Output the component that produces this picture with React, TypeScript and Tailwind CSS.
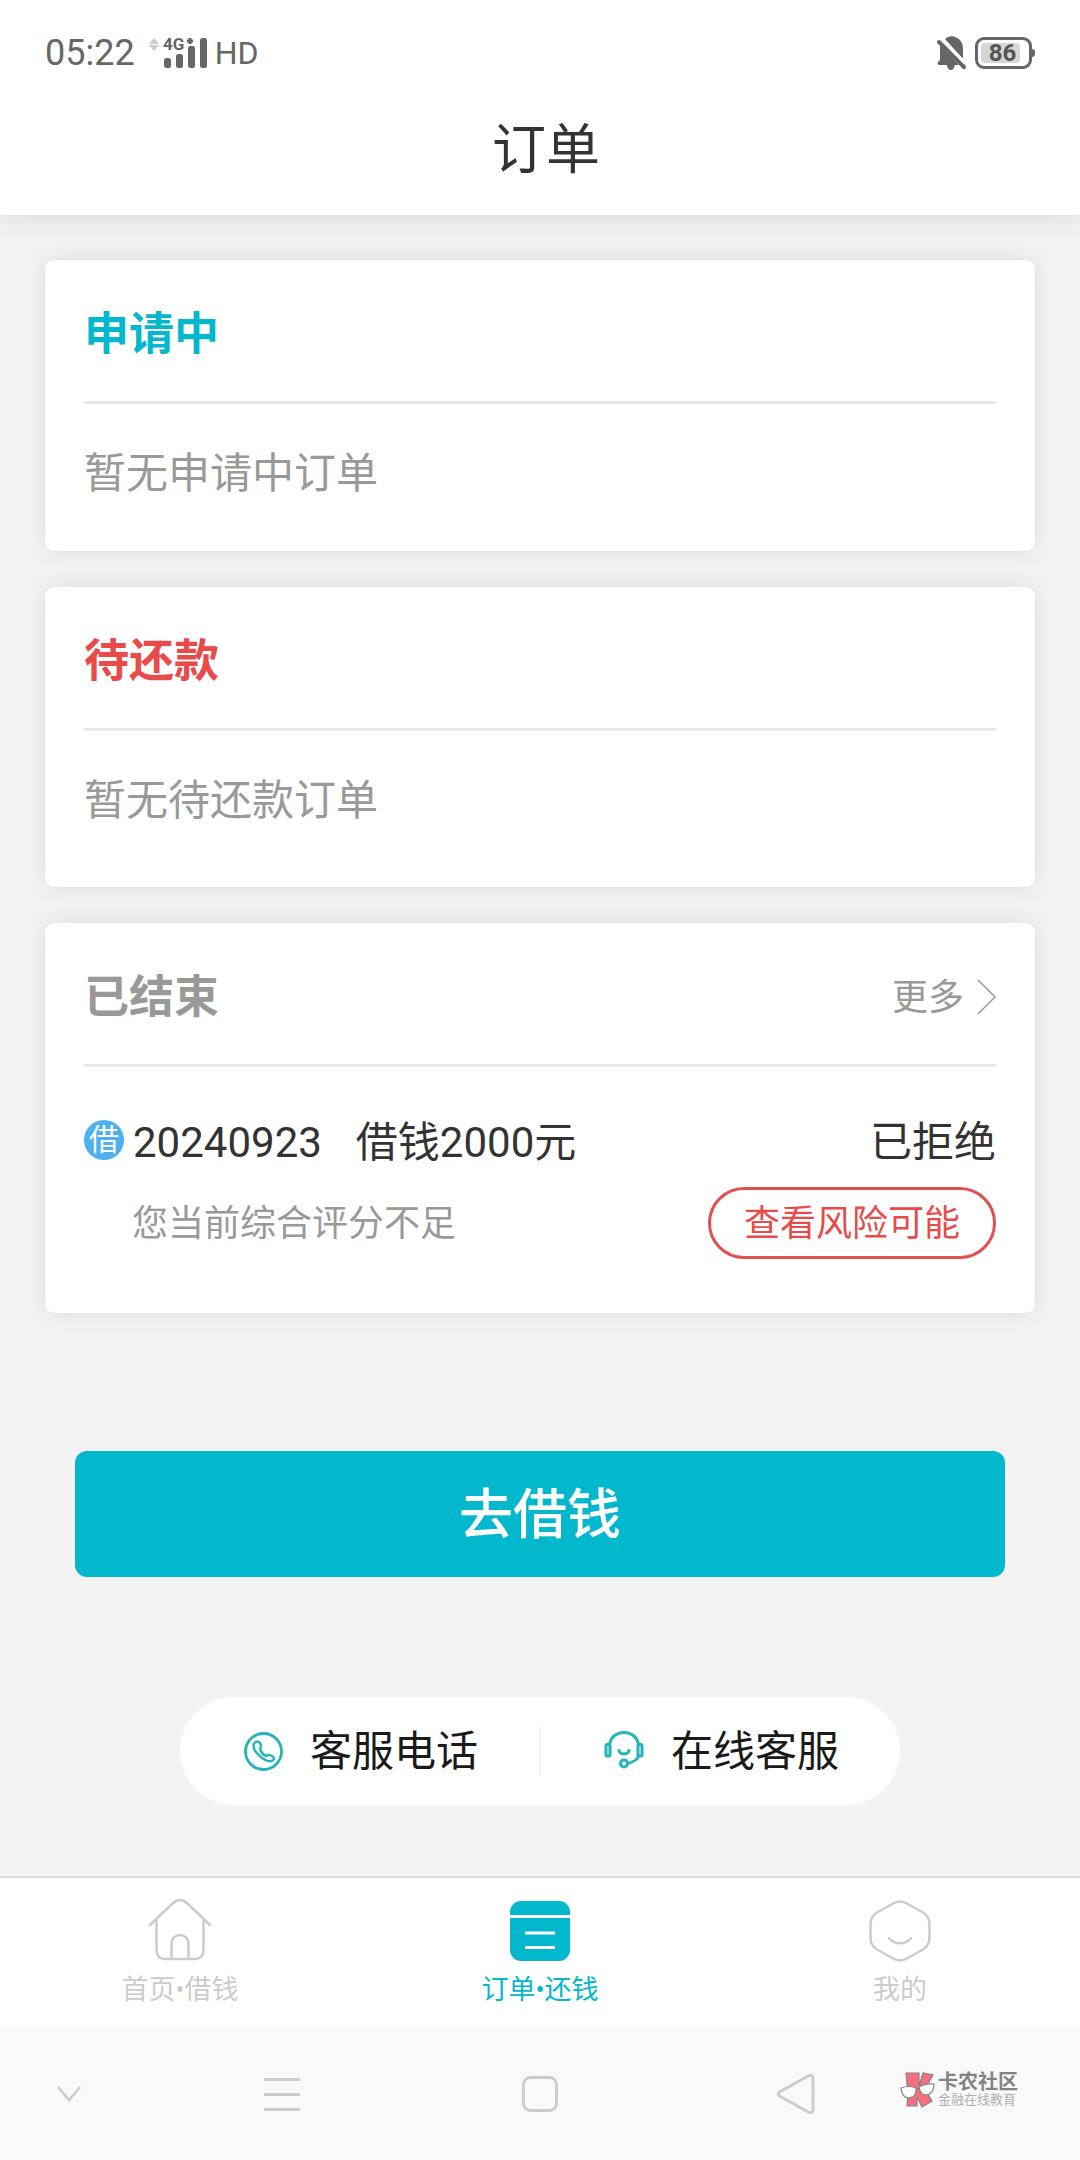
import type { ReactNode } from 'react'

interface OrderCardProps {
  title: string
  titleClass: string
  action?: ReactNode
  bodyClass: string
  children: ReactNode
}

function StatusBar() {
  return (
    <div className="flex h-[75px] items-end justify-between px-[45px] text-[#666]">
      <div className="flex h-11 items-center">
        <span className="text-[36px] leading-[44px]">05:22</span>
        <svg className="ml-3 h-9 w-[64px]" viewBox="0 0 64 36" fill="currentColor" aria-hidden="true">
          <path d="M7 3l5 6H2zM7 16l5-6H2z" fill="#ccc" />
          <text x="16" y="15" fontSize="17" fontWeight="700">4G</text>
          <path d="M43 3v6M40 6h6" stroke="currentColor" strokeWidth="3" />
          <rect x="17" y="23" width="7" height="10" rx="2.500" />
          <rect x="29" y="19" width="7" height="14" rx="2.500" />
          <rect x="41" y="11" width="7" height="22" rx="2.500" />
          <rect x="53" y="3" width="7" height="30" rx="2.500" />
        </svg>
        <span className="ml-1 text-[32px] leading-[44px]">HD</span>
      </div>
      <div className="flex h-11 items-center gap-2">
        <svg className="h-9 w-8" viewBox="0 0 32 36" fill="currentColor" aria-hidden="true">
          <path d="M10 4C13 1 18 0 22 3c4 2 6 6 6 11v10z" />
          <path d="M5 10l19 20h-4c-1 3-2 5-4 5s-4-2-4-5H4c-1 0-2-2-1-3l2-2z" />
          <path d="M4 7l25 25" stroke="currentColor" strokeWidth="4" strokeLinecap="round" />
          <path d="M8 5l22 23" stroke="#fff" strokeWidth="3" />
        </svg>
        <div className="flex items-center">
          <div className="flex h-8 w-[57px] items-center rounded-[9px] border-[3px] border-current pl-[3px]">
            <span className="flex h-5 w-[39px] items-center justify-center rounded-sm bg-[#d6d6d6] pl-1 text-[24px] leading-5 font-bold text-[#555]">
              86
            </span>
          </div>
          <span className="h-2 w-[3px] rounded-r bg-current" />
        </div>
      </div>
    </div>
  )
}

function OrderCard({ title, titleClass, action, bodyClass, children }: OrderCardProps) {
  return (
    <section className="rounded-[9px] bg-white px-[39px] shadow-[0_0_24px_rgba(0,0,0,0.1)]">
      <div className="flex h-36 items-center justify-between border-b-[3px] border-[#e8e8e8] pt-2">
        <h2 className={`text-[45px] leading-[60px] font-bold ${titleClass}`}>{title}</h2>
        {action}
      </div>
      <div className={bodyClass}>{children}</div>
    </section>
  )
}

function PhoneIcon() {
  return (
    <svg className="size-[45px]" viewBox="0 0 45 45" fill="none" stroke="#22b5bb" strokeWidth="2.800" aria-hidden="true">
      <circle cx="22.500" cy="22.500" r="18" />
      <path
        d="M13.500 14c2-2 4-2 5.500 0 1.500 2 1 4 0 6 1 3 3 5.500 5.500 7 2-1 3.500-1.500 5.500-.5 3 1.500 4 3 2 4.500-2 2.500-7 1-11-2-4-3-7-6.500-8-9.500-.7-2-.7-4 .5-5.500z"
        strokeWidth="2.400"
        strokeLinejoin="round"
      />
    </svg>
  )
}

function HeadsetIcon() {
  return (
    <svg className="size-[45px]" viewBox="0 0 45 45" fill="none" stroke="#22b5bb" strokeWidth="3" aria-hidden="true">
      <path d="M7.500 16C8.500 8 14.500 3.500 22 3.500S35.500 8 36.500 16" />
      <rect x="4" y="15.500" width="4" height="11.500" rx="1" />
      <rect x="36" y="15.500" width="4" height="11.500" rx="1" />
      <path d="M17 21.500c1 4.500 9 4.500 10 0" strokeLinecap="round" />
      <circle cx="22" cy="34.500" r="3.500" />
      <path d="M36.500 27c-1 4-5 6-11 7.500" />
    </svg>
  )
}

function HomeIcon() {
  return (
    <svg className="size-16" viewBox="0 0 64 64" fill="none" stroke="#ccc" strokeWidth="2.500" aria-hidden="true">
      <path d="M2 27L25 5q7-6 14 0l23 22" strokeLinecap="round" />
      <path d="M8.500 21v31q0 9 9 9h29q9 0 9-9V21" />
      <path d="M23.500 61V46c0-12 17-12 17 0v15" />
    </svg>
  )
}

function OrderIcon() {
  return (
    <svg className="size-16" viewBox="0 0 64 64" fill="none" aria-hidden="true">
      <rect x="2" y="3" width="60" height="60" rx="11" fill="#03b7cd" />
      <path d="M2 18.500h60M17 35h30M17 49.500h30" stroke="#fff" strokeWidth="3" />
    </svg>
  )
}

function MineIcon() {
  return (
    <svg className="size-16" viewBox="0 0 64 64" fill="none" stroke="#ccc" strokeWidth="2.500" aria-hidden="true">
      <path d="M26 5q6-3 12 0l17 9.500q6.500 4 6.500 12v13q0 8-6.500 12L38 61q-6 3-12 0L9 51.500q-6.500-4-6.500-12v-13q0-8 6.500-12z" />
      <path d="M21 40c5 7 17 7 22 0" strokeLinecap="round" />
    </svg>
  )
}

const tabs = [
  { label: '首页•借钱', icon: <HomeIcon />, active: false },
  { label: '订单•还钱', icon: <OrderIcon />, active: true },
  { label: '我的', icon: <MineIcon />, active: false },
]

function Watermark() {
  return (
    <div className="absolute top-11 right-[62px] flex items-center opacity-90">
      <svg className="h-9 w-[38px]" viewBox="0 0 38 36" stroke="#777" strokeWidth="1.200" aria-hidden="true">
        <path d="M6 1h13v13l4-13 10 2-8 14 7 12-10 6-5-10v9H7l1-11z" fill="#f5616f" />
        <path d="M1 16q8-3 15 0 1 9-7 10-7 0-8-10z" fill="#fff" />
        <path d="M19 15q6-4 15-3 0 9-7 11-7 0-8-8zM16 17l3-1" fill="#fff" />
      </svg>
      <div>
        <p className="text-[20px] leading-5 font-bold text-[#777]">卡农社区</p>
        <p className="text-[13px] leading-4 text-[#aaa]">金融在线教育</p>
      </div>
    </div>
  )
}

function SystemNav() {
  return (
    <div className="relative grid h-[132px] grid-cols-[138fr_288fr_228fr_284fr_142fr] bg-[#f9f9f9] text-[#ccc]">
      <button type="button" aria-label="收起" className="flex items-center justify-center">
        <svg className="size-10" viewBox="0 0 40 40" fill="none" stroke="currentColor" strokeWidth="2.500">
          <path d="M9 13l11 13 11-13" />
        </svg>
      </button>
      <button type="button" aria-label="菜单" className="flex items-center justify-center">
        <svg className="size-10" viewBox="0 0 40 40" fill="none" stroke="currentColor" strokeWidth="3">
          <path d="M2 5.500h36M2 20.500h36M2 35.500h36" />
        </svg>
      </button>
      <button type="button" aria-label="主屏幕" className="flex items-center justify-center">
        <svg className="size-10" viewBox="0 0 40 40" fill="none" stroke="currentColor" strokeWidth="2.800">
          <rect x="3.500" y="3.500" width="33" height="33" rx="7" />
        </svg>
      </button>
      <button type="button" aria-label="返回" className="flex items-center justify-center">
        <svg className="size-10" viewBox="0 0 40 40" fill="none" stroke="currentColor" strokeWidth="2.800">
          <path d="M3.500 18L32 2q5-2 5 2v32q0 4-5 2L3.500 22q-3-2 0-4z" />
        </svg>
      </button>
      <Watermark />
    </div>
  )
}

export default function App() {
  return (
    <div className="bg-[#f3f3f3] font-[Roboto,'Noto_Sans_CJK_SC',sans-serif] text-[#333]" lang="zh-CN">
      <header className="relative bg-white shadow-[0_0_30px_rgba(0,0,0,0.12)]">
        <StatusBar />
        <h1 className="h-[140px] pt-10 pl-3 text-center text-[54px] leading-[72px]">订单</h1>
      </header>

      <main className="px-[45px] pt-[45px] pb-[71px]">
        <div className="flex flex-col gap-9">
          <OrderCard title="申请中" titleClass="text-[#03b7cd]" bodyClass="pt-10 pb-[47px]">
            <p className="text-[42px] leading-[60px] text-[#999]">暂无申请中订单</p>
          </OrderCard>

          <OrderCard title="待还款" titleClass="text-[#e94b4b]" bodyClass="pt-10 pb-14">
            <p className="text-[42px] leading-[60px] text-[#999]">暂无待还款订单</p>
          </OrderCard>

          <OrderCard
            title="已结束"
            titleClass="text-[#999]"
            bodyClass="pt-[45px] pb-[54px]"
            action={
              <a href="#more" className="flex items-center gap-3 text-[36px] leading-[60px] text-[#999]">
                更多
                <svg className="h-9 w-5" viewBox="0 0 20 36" fill="none" stroke="currentColor" strokeWidth="1.500" aria-hidden="true">
                  <path d="M2 0l17 17L2 34" />
                </svg>
              </a>
            }
          >
            <div className="flex items-start justify-between text-[42px] leading-[62px]">
              <div className="flex items-start">
                <span className="mt-2 flex size-10 items-center justify-center rounded-full bg-[#4fb0ef] text-[30px] leading-10 text-white">
                  借
                </span>
                <span className="ml-[9px]">20240923</span>
                <span className="ml-[34px]">借钱2000元</span>
              </div>
              <span>已拒绝</span>
            </div>
            <div className="mt-[13px] flex items-center justify-between pl-12 text-[36px]">
              <p className="pt-0.5 leading-[54px] text-[#999]">您当前综合评分不足</p>
              <button
                type="button"
                className="h-[72px] rounded-full border-[3px] border-[#e05050] px-[33px] pt-0.5 leading-[64px] text-[#e94b4b]"
              >
                查看风险可能
              </button>
            </div>
          </OrderCard>
        </div>

        <div className="px-[30px] pt-[138px]">
          <button
            type="button"
            className="h-[126px] w-full rounded-xl bg-[#03b7cd] pt-1 text-[54px] leading-[72px] font-medium text-white"
          >
            去借钱
          </button>
        </div>

        <div className="mx-auto mt-[120px] flex h-[108px] max-w-[720px] items-center rounded-full bg-white text-[42px] leading-[60px] text-[#1a1a1a]">
          <a href="#phone" className="flex flex-1 items-center justify-center gap-6">
            <PhoneIcon />
            <span className="pt-0.5">客服电话</span>
          </a>
          <span className="h-12 w-0.5 bg-[#f3f3f3]" />
          <a href="#chat" className="flex flex-1 items-center justify-center gap-6">
            <HeadsetIcon />
            <span className="pt-0.5">在线客服</span>
          </a>
        </div>
      </main>

      <nav className="grid h-[152px] grid-cols-3 border-t-2 border-[#ddd] bg-white">
        {tabs.map((tab) => (
          <a
            key={tab.label}
            href="#tab"
            aria-current={tab.active ? 'page' : undefined}
            className={`flex flex-col items-center pt-5 text-[27px] leading-[36px] ${
              tab.active ? 'text-[#03b7cd]' : 'text-[#ccc]'
            }`}
          >
            {tab.icon}
            <span className="mt-2.5">{tab.label}</span>
          </a>
        ))}
      </nav>
      <SystemNav />
    </div>
  )
}
